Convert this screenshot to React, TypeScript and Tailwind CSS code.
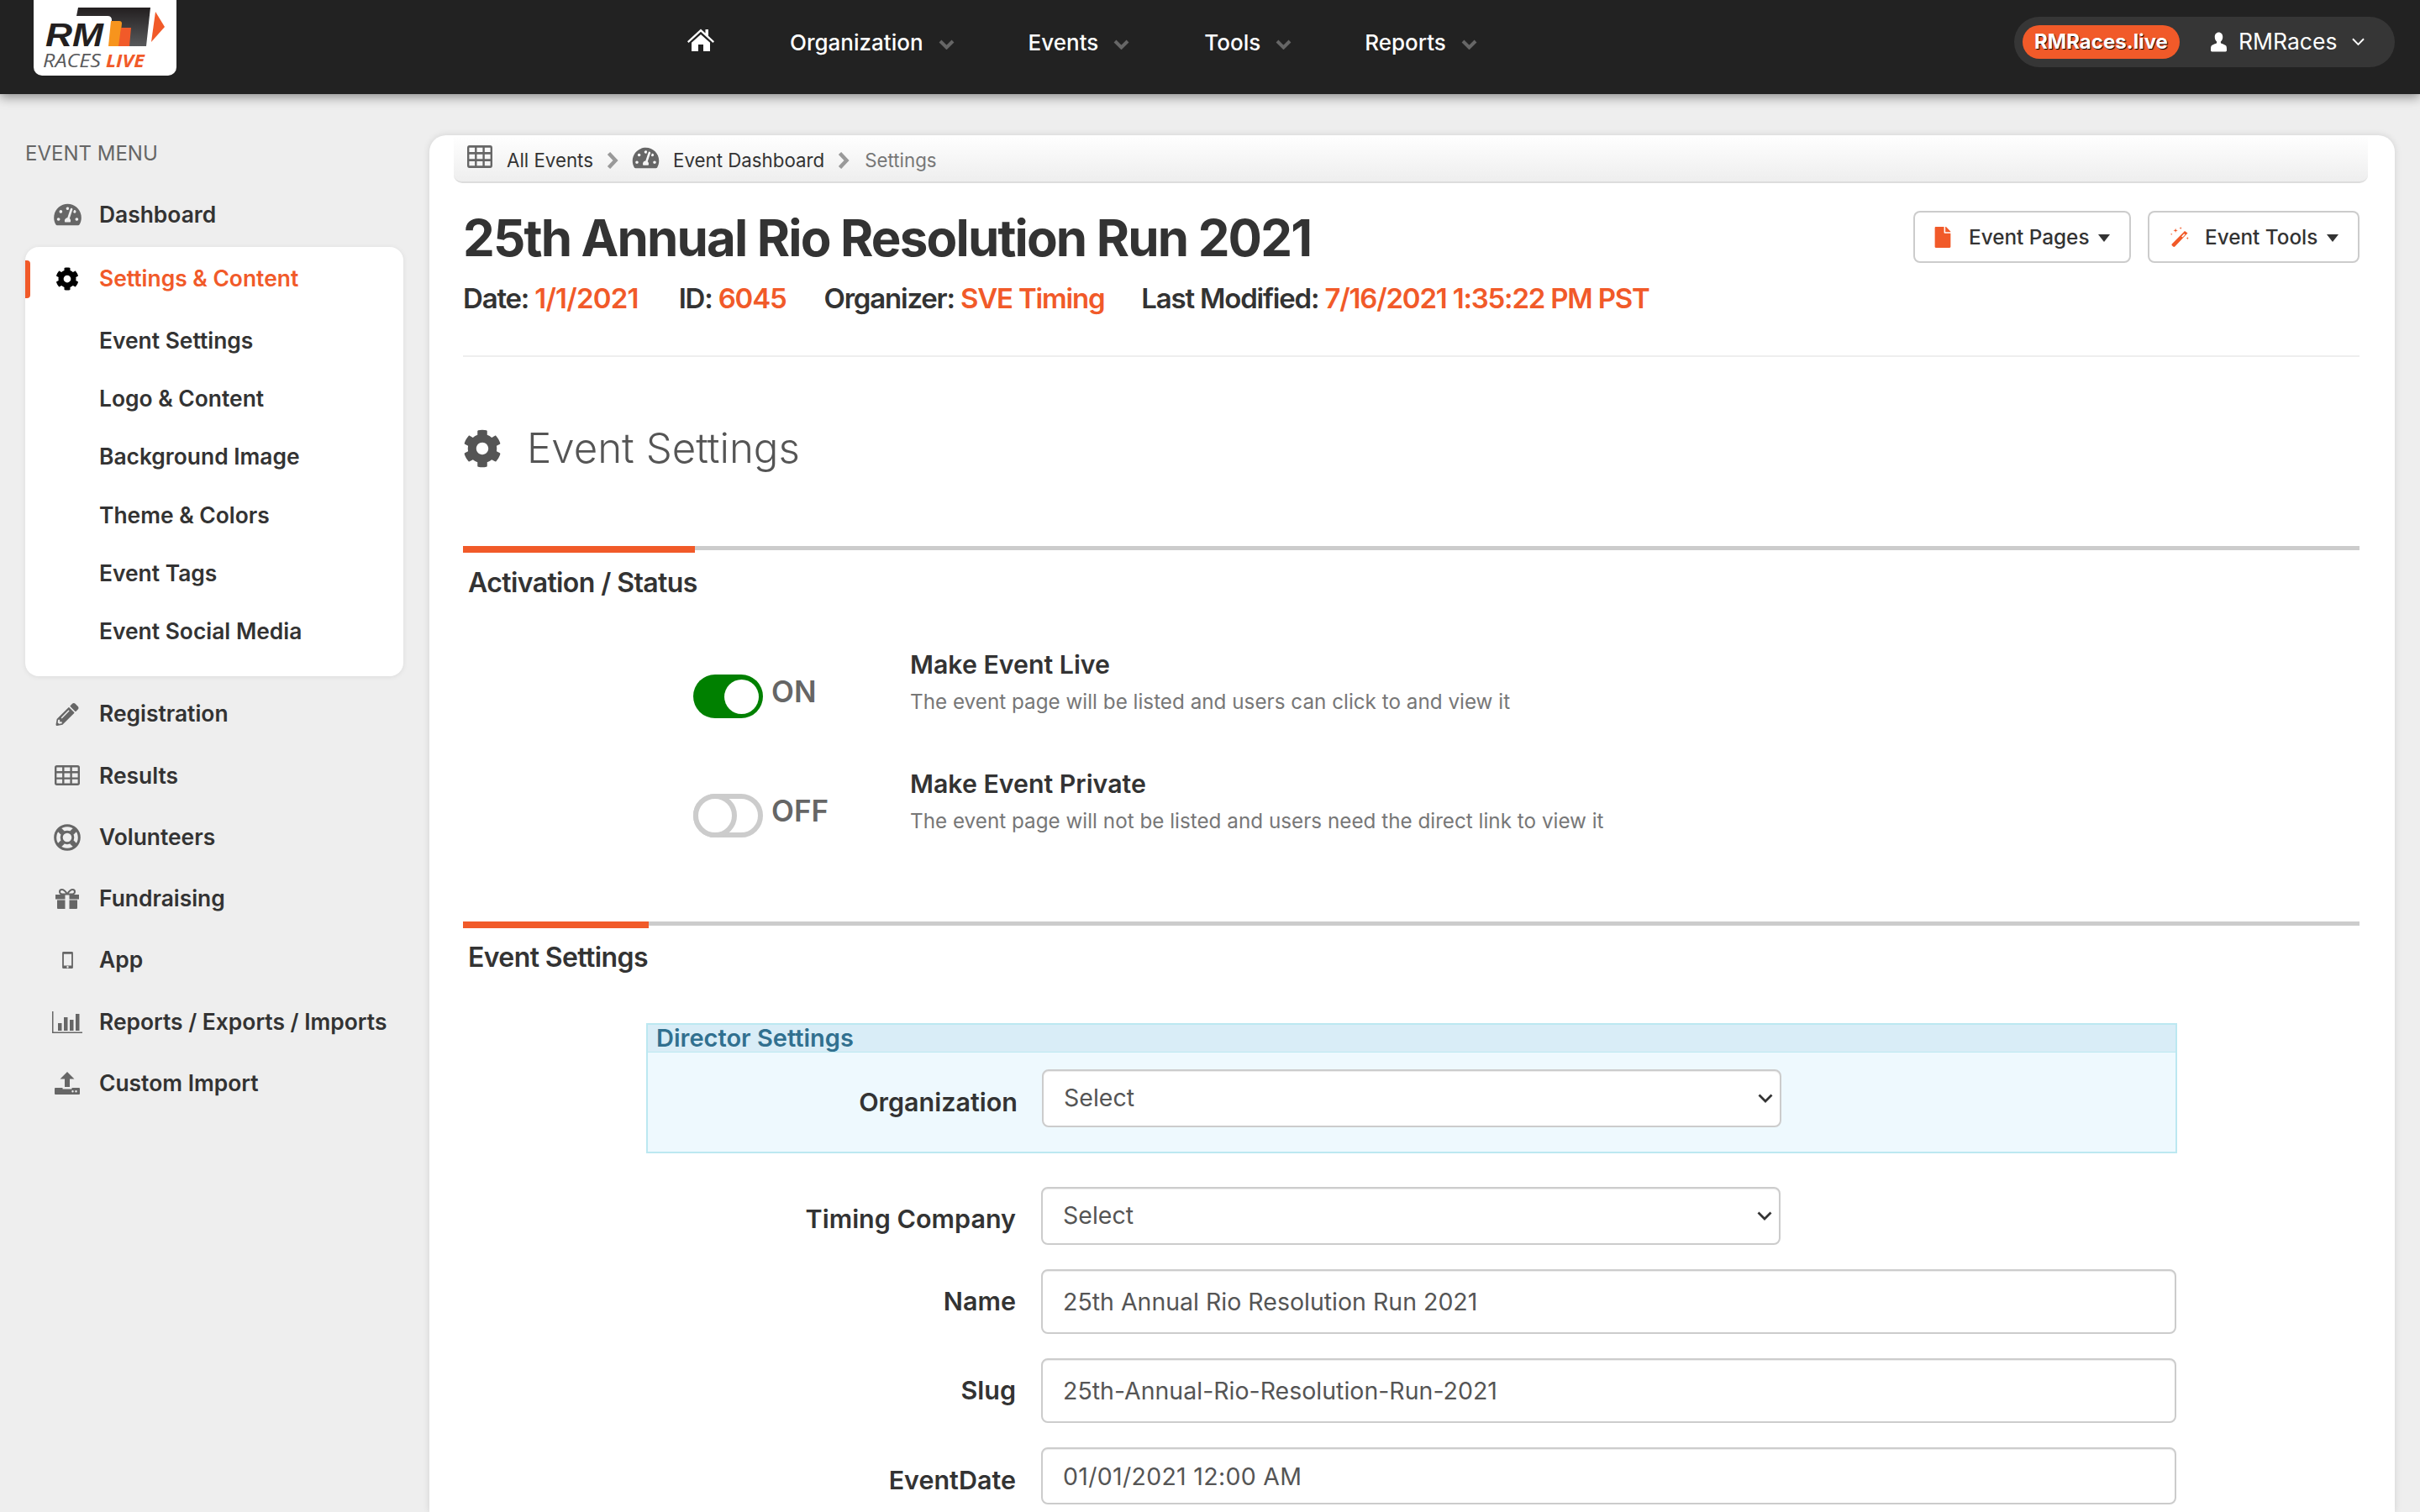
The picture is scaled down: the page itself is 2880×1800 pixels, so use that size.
import React from "react";
import { FaTachometerAlt, FaCog, FaPencilAlt, FaFile } from "react-icons/fa";

const Grid = ({ className = "" }: { className?: string }) => (
  <svg viewBox="0 0 30 24" preserveAspectRatio="none" className={className} fill="none" stroke="currentColor" strokeWidth="2.400">
    <rect x="1.200" y="1.200" width="27.600" height="21.600" rx="1.500" />
    <path d="M1 8.300h28M1 15.600h28M10.300 1v22M19.600 1v22" />
  </svg>
);
const Ring = ({ className = "" }: { className?: string }) => (
  <svg viewBox="0 0 32 32" className={className} fill="none" stroke="currentColor">
    <circle cx="16" cy="16" r="14.300" strokeWidth="3" />
    <circle cx="16" cy="16" r="6.800" strokeWidth="3" />
    <path d="M10.700 10.700L6 6M21.300 10.700L26 6M10.700 21.300L6 26M21.300 21.300L26 26" strokeWidth="6" />
  </svg>
);
const Gift = ({ className = "" }: { className?: string }) => (
  <svg viewBox="0 0 28 24" className={className} fill="currentColor">
    <path d="M0 7h11.500v5.500H0zM16.500 7H28v5.500H16.500zM2 13.500h9.500V24H3a1 1 0 0 1-1-1zM16.500 13.500H26V23a1 1 0 0 1-1 1h-8.500z" />
    <path d="M14 6.500C11 1.500 9 1 7.500 1 5.800 1 5 2.300 5 3.500 5 5.300 6.500 6.500 9 6.500zM14 6.500C17 1.500 19 1 20.500 1 22.200 1 23 2.300 23 3.500 23 5.300 21.500 6.500 19 6.500z" fill="none" stroke="currentColor" strokeWidth="2" />
  </svg>
);
const Wand = ({ className = "" }: { className?: string }) => (
  <svg viewBox="0 0 22 22" className={className} fill="currentColor">
    <path fillRule="evenodd" d="M16.500 4.500l3.200 2.400L6 21.400c-.7.700-1.500.700-2.200.100l-1-.8c-.7-.6-.7-1.400-.1-2.100zM15.800 7.500l-2.800 3 1.200 1 2.800-3z" />
    <path d="M6.500 1.500l.6 1.900 1.900.6-1.900.6-.6 1.900-.6-1.900L4 4l1.900-.6zM12 0l.4 1.100 1.100.4-1.100.4L12 3l-.4-1.100-1.100-.4 1.100-.4zM19.500 11l.4 1.100 1.100.4-1.100.4-.4 1.100-.4-1.100-1.100-.4 1.100-.4zM2 7l.3.800.8.300-.8.300-.3.800-.3-.8-.8-.3.800-.3z" />
  </svg>
);
const Phone = ({ className = "" }: { className?: string }) => (
  <svg viewBox="0 0 16 24" className={className} fill="currentColor">
    <path fillRule="evenodd" d="M2.500 1h11A1.500 1.500 0 0 1 15 2.500v19a1.500 1.500 0 0 1-1.500 1.500h-11A1.500 1.500 0 0 1 1 21.500v-19A1.500 1.500 0 0 1 2.500 1zM3 4v15h10V4zM8 19.700a1.300 1.300 0 1 0 0 2.600 1.300 1.300 0 0 0 0-2.600z" />
  </svg>
);
const Bars = ({ className = "" }: { className?: string }) => (
  <svg viewBox="0 0 36 26" className={className} fill="currentColor">
    <path d="M0 0h1.500v24.500H36V26H0zM7 14h4.500v9H7zM14 7h4.500v16H14zM21 10h4.500v13H21zM28 3h4.500v20H28z" />
  </svg>
);
const Upload = ({ className = "" }: { className?: string }) => (
  <svg viewBox="0 0 30 27" className={className} fill="currentColor">
    <path fillRule="evenodd" d="M15 0l8.500 8.500H18V18h-6V8.500H6.500zM1 19h8.500v1.500h11V19H29a1 1 0 0 1 1 1v6a1 1 0 0 1-1 1H1a1 1 0 0 1-1-1v-6a1 1 0 0 1 1-1zM21.500 22a1.200 1.200 0 1 0 0 2.400 1.200 1.200 0 0 0 0-2.400zM25.500 22a1.200 1.200 0 1 0 0 2.400 1.200 1.200 0 0 0 0-2.400z" />
  </svg>
);
const Home = ({ className = "" }: { className?: string }) => (
  <svg viewBox="0 0 32 27" className={className} fill="currentColor">
    <path d="M16 0.500l5.500 5V1H25v7.700l7 6.500-1.500 1.800L16 3.800 1.500 17 0 15.200zM16 7l11 9.800V27h-8v-8h-6v8H5V16.800z" />
  </svg>
);
const User = ({ className = "" }: { className?: string }) => (
  <svg viewBox="0 0 20 24" className={className} fill="currentColor">
    <path d="M10 0c3 0 5 2.400 5 5.800 0 2.600-1 4.700-2.500 5.700v1.500c0 1 4.500 1.500 6.500 3.500 1 1 1 3 1 6 0 1-.5 1.500-1.500 1.500h-17C.5 24 0 23.500 0 22.500c0-3 0-5 1-6 2-2 6.500-2.500 6.500-3.500v-1.500C6 10.500 5 8.400 5 5.800 5 2.400 7 0 10 0z" />
  </svg>
);
const Chev = ({ className = "" }: { className?: string }) => (
  <svg viewBox="0 0 19 12" className={className} fill="none" stroke="currentColor" strokeWidth="4">
    <path d="M2 2l7.500 7.500L17 2" />
  </svg>
);
const ChevR = ({ className = "" }: { className?: string }) => (
  <svg viewBox="0 0 14 20" className={className} fill="none" stroke="currentColor" strokeWidth="4.500">
    <path d="M2.500 1.500L10.500 10l-8 8.500" />
  </svg>
);
const Caret = () => (
  <span className="inline-block w-0 h-0 border-x-[7.5px] border-x-transparent border-t-[9px] border-t-[#333] ml-[11px] mt-[3px]" />
);

const Logo = () => (
  <svg viewBox="0 0 170 90" className="w-[170px] h-[90px] block">
    <defs>
      <linearGradient id="lg" x1="0" y1="0" x2="0" y2="1">
        <stop offset="0" stopColor="#231f20" />
        <stop offset="1" stopColor="#58595b" />
      </linearGradient>
    </defs>
    <path d="M53 9H139L134 55H90L93 24Q93 19 88 19H51z" fill="url(#lg)" />
    <path d="M92 25H102Q105 25 105 28L102 55H89z" fill="#f7941d" />
    <path d="M104 33H116L114 55H101z" fill="#f15a29" />
    <path d="M145 14L156 32L140 50z" fill="#f15a29" />
    <text x="14" y="55" fontFamily="'Liberation Sans',sans-serif" fontWeight="700" fontStyle="italic" fontSize="39" fill="#231f20" textLength="69" lengthAdjust="spacingAndGlyphs">RM</text>
    <text x="11" y="80" fontFamily="'Open Sans',sans-serif" fontStyle="italic" fontSize="21" fill="#58595b" textLength="69" lengthAdjust="spacingAndGlyphs">RACES</text>
    <text x="86" y="80" fontFamily="'Open Sans',sans-serif" fontWeight="700" fontStyle="italic" fontSize="21" fill="#f15a29" textLength="46" lengthAdjust="spacingAndGlyphs">LIVE</text>
  </svg>
);

const SideRow = ({ icon, label }: { icon: React.ReactNode; label: string }) => (
  <div className="flex items-center h-[73.3px] text-[#333] font-semibold text-[26.4px]">
    <span className="w-[36px] ml-[32px] mr-[20px] flex justify-center text-[#666]">{icon}</span>
    <span>{label}</span>
  </div>
);

const SubRow = ({ label }: { label: string }) => (
  <div className="flex items-center h-[69.2px] pl-[88px] text-[#333] font-semibold text-[26.4px] translate-y-[1px]">{label}</div>
);

const SectionHead = ({ title, w, gap }: { title: string; w: string; gap: string }) => (
  <div>
    <div className="h-[5px] bg-[#ccc]">
      <div className={`h-[8px] bg-[#f15a29] ${w}`} />
    </div>
    <h2 className={`pl-[6px] ${gap} text-[32px] leading-[44px] font-semibold text-[#333] tracking-[-0.6px]`}>{title}</h2>
  </div>
);

const Toggle = ({ on }: { on: boolean }) =>
  on ? (
    <div className="w-[83px] h-[52px] rounded-full bg-[#008000] flex justify-end items-center pr-[5px]">
      <div className="w-[41px] h-[41px] rounded-full bg-white" />
    </div>
  ) : (
    <div className="relative w-[83px] h-[52px] rounded-full border-[6px] border-[#ccc] bg-white">
      <div className="absolute -left-[6px] -top-[6px] w-[52px] h-[52px] rounded-full border-[6px] border-[#ccc] bg-white" />
    </div>
  );

const StatusRow = ({ on, title, desc }: { on: boolean; title: string; desc: string }) => (
  <div className="flex h-[142px]">
    <div className="w-[274px]" />
    <div className="w-[258px] flex items-start pt-[14px]">
      <Toggle on={on} />
      <span className="ml-[10px] text-[35px] leading-[40px] font-semibold text-[#666]">{on ? "ON" : "OFF"}</span>
    </div>
    <div>
      <div className="text-[30.3px] leading-[40px] font-semibold text-[#333] -mt-[18px]">{title}</div>
      <div className="text-[24.25px] leading-[40px] text-[#777] mt-[5px]">{desc}</div>
    </div>
  </div>
);

const fieldCls =
  "block bg-white border-2 border-[#ccc] rounded-[8px] text-[28.5px] text-[#555] shadow-[inset_0_1px_1px_rgba(0,0,0,0.075)] outline-none";

const Label = ({ children, cls = "" }: { children: React.ReactNode; cls?: string }) => (
  <div className={`w-[440px] text-right text-[30.5px] font-semibold text-[#333] ${cls}`}>{children}</div>
);

const SelectBox = () => (
  <div className="relative w-[880px]">
    <select className={`${fieldCls} appearance-none w-full h-[69px] pl-[24px] pr-[10px]`} defaultValue="Select">
      <option>Select</option>
    </select>
    <svg viewBox="0 0 18 11" className="absolute right-[10px] top-[29px] w-[18px] h-[11px] text-[#333] pointer-events-none" fill="none" stroke="currentColor" strokeWidth="2.800">
      <path d="M1.500 1.500L9 9l7.500-7.500" />
    </svg>
  </div>
);

const TextBox = ({ v, h, cls = "" }: { v: string; h: string; cls?: string }) => (
  <input readOnly value={v} className={`${fieldCls} w-[1351px] ${h} px-[24px] ${cls}`} />
);

export default function App() {
  return (
    <div className="w-[2880px] h-[1800px] overflow-hidden bg-[#eeeeee] font-['Inter',sans-serif] flex flex-col">
      <header className="relative z-10 h-[112px] shrink-0 bg-[#222222] shadow-[0_4px_12px_rgba(0,0,0,0.4)] flex items-start text-white">
        <div className="ml-[40px] w-[170px] h-[90px] bg-white rounded-b-[10px] overflow-hidden">
          <Logo />
        </div>
        <nav className="flex items-center h-[100px] ml-[608px] text-[26px] font-medium">
          <Home className="w-[32px] h-[27px] mb-[5px]" />
          <div className="flex items-center ml-[90px]">
            <span>Organization</span>
            <Chev className="w-[19px] h-[12px] ml-[18px] mt-[5px] text-[#666]" />
          </div>
          <div className="flex items-center ml-[88px]">
            <span>Events</span>
            <Chev className="w-[19px] h-[12px] ml-[18px] mt-[5px] text-[#666]" />
          </div>
          <div className="flex items-center ml-[89px]">
            <span>Tools</span>
            <Chev className="w-[19px] h-[12px] ml-[18px] mt-[5px] text-[#666]" />
          </div>
          <div className="flex items-center ml-[87px]">
            <span>Reports</span>
            <Chev className="w-[19px] h-[12px] ml-[18px] mt-[5px] text-[#666]" />
          </div>
        </nav>
        <div className="ml-auto mr-[30px] mt-[20px] w-[453px] h-[60px] rounded-full bg-[#363636] flex items-center pl-[10px]">
          <div className="w-[187px] h-[40px] rounded-full bg-[#f15a29] flex items-center justify-center text-[24px] font-bold [text-shadow:1px_1px_1px_#000]">
            RMRaces.live
          </div>
          <User className="w-[19px] h-[24px] ml-[37px]" />
          <span className="ml-[14px] text-[26.5px]">RMRaces</span>
          <svg viewBox="0 0 16 10" className="w-[15px] h-[10px] ml-[18px]" fill="none" stroke="currentColor" strokeWidth="2"><path d="M1 1l7 7 7-7" /></svg>
        </div>
      </header>

      <div className="flex flex-1 min-h-0">
        <aside className="w-[511px] shrink-0 px-[30px] pt-[53px]">
          <div className="text-[24px] leading-[36px] text-[#666] mb-[18px]">EVENT MENU</div>
          <SideRow icon={<FaTachometerAlt className="w-[33px] h-[29px]" />} label="Dashboard" />
          <div className="relative mt-[2px] w-[450px] bg-white rounded-[16px] shadow-[0_1px_6px_rgba(0,0,0,0.08)] pb-[20px]">
            <div className="absolute left-0 top-[16px] w-[6px] h-[45px] bg-[#f15a29] rounded-r-[4px]" />
            <div className="flex items-center h-[76px] font-semibold text-[26.4px] text-[#f15a29]">
              <span className="w-[36px] ml-[32px] mr-[20px] flex justify-center text-black"><FaCog className="w-[28px] h-[28px]" /></span>
              <span>Settings &amp; Content</span>
            </div>
            {["Event Settings", "Logo & Content", "Background Image", "Theme & Colors", "Event Tags", "Event Social Media"].map((t) => (
              <SubRow key={t} label={t} />
            ))}
          </div>
          <div className="mt-[8px]">
            <SideRow icon={<FaPencilAlt className="w-[28px] h-[27px]" />} label="Registration" />
            <SideRow icon={<Grid className="w-[30px] h-[24px]" />} label="Results" />
            <SideRow icon={<Ring className="w-[32px] h-[32px]" />} label="Volunteers" />
            <SideRow icon={<Gift className="w-[28px] h-[24px]" />} label="Fundraising" />
            <SideRow icon={<Phone className="w-[15px] h-[22px]" />} label="App" />
            <SideRow icon={<Bars className="w-[37px] h-[26px]" />} label="Reports / Exports / Imports" />
            <SideRow icon={<Upload className="w-[30px] h-[27px]" />} label="Custom Import" />
          </div>
        </aside>

        <main className="w-[2339px] mt-[49px] bg-white rounded-t-[20px] shadow-[0_0_8px_rgba(0,0,0,0.12)] pl-[29px] pr-[32px]">
          <div className="h-[57px] rounded-b-[10px] bg-gradient-to-b from-white to-[#eeeeee] border-b-2 border-[#ddd] flex items-center pl-[16px] text-[22.3px] pt-[5px]">
            <Grid className="w-[30px] h-[27px] text-[#666] -mt-[9px]" />
            <span className="ml-[17px] text-[#333]">All Events</span>
            <ChevR className="w-[14px] h-[20px] mx-[16px] text-[#999]" />
            <FaTachometerAlt className="w-[33px] h-[28px] text-[#666] -mt-[7px]" />
            <span className="ml-[16px] text-[#333]">Event Dashboard</span>
            <ChevR className="w-[14px] h-[20px] ml-[16px] mr-[18px] text-[#999]" />
            <span className="text-[#777]">Settings</span>
          </div>

          <div className="pl-[11px] pr-[10px]">
            <div className="flex justify-between pt-[29px] h-[207px] border-b-2 border-[#eee]">
              <div>
                <h1 className="text-[60px] leading-[72px] font-bold text-[#333] tracking-[-1.85px]">25th Annual Rio Resolution Run 2021</h1>
                <div className="flex mt-[14px] text-[33px] leading-[44px] font-semibold text-[#333] tracking-[-1.2px]">
                  <span>Date: <span className="text-[#f15a29] tracking-[-0.8px]">1/1/2021</span></span>
                  <span className="ml-[48px]">ID: <span className="text-[#f15a29]">6045</span></span>
                  <span className="ml-[45px]">Organizer: <span className="text-[#f15a29]">SVE Timing</span></span>
                  <span className="ml-[44px]">Last Modified: <span className="text-[#f15a29]">7/16/2021 1:35:22 PM PST</span></span>
                </div>
              </div>
              <div className="flex gap-[20px] items-start pt-[4px]">
                <div className="w-[259px] h-[62px] border-2 border-[#ccc] rounded-[8px] flex items-center pl-[23px] text-[24.3px] font-medium text-[#333]">
                  <FaFile className="w-[20px] h-[25px] text-[#f15a29]" />
                  <span className="ml-[21px]">Event Pages</span>
                  <Caret />
                </div>
                <div className="w-[252px] h-[62px] border-2 border-[#ccc] rounded-[8px] flex items-center pl-[24px] text-[24.3px] font-medium text-[#333]">
                  <Wand className="w-[24px] h-[24px] text-[#f15a29]" />
                  <span className="ml-[18px]">Event Tools</span>
                  <Caret />
                </div>
              </div>
            </div>

            <div className="flex items-center h-[110px] mt-[54px] text-[#555]">
              <FaCog className="w-[46px] h-[46px]" />
              <span className="ml-[30px] text-[49.2px] font-light text-[#555]">Event Settings</span>
            </div>

            <div className="mt-[61px]">
              <SectionHead title="Activation / Status" w="w-[276px]" gap="mt-[17px]" />
            </div>
            <div className="mt-[73px]">
              <StatusRow on title="Make Event Live" desc="The event page will be listed and users can click to and view it" />
              <StatusRow on={false} title="Make Event Private" desc="The event page will not be listed and users need the direct link to view it" />
            </div>

            <div className="mt-[24px]">
              <SectionHead title="Event Settings" w="w-[221px]" gap="mt-[16px]" />
            </div>

            <div className="ml-[218px] w-[1822px] mt-[56px]">
              <div className="h-[155px] border-2 border-[#bce8f1] bg-[#eef9fe]">
                <div className="h-[33px] bg-[#d9edf7] border-b border-[#bce8f1] pl-[10px] text-[29px] leading-[31px] font-semibold text-[#31708f]">Director Settings</div>
                <div className="flex items-start mt-[20px]">
                  <Label cls="leading-[44px] mt-[17px] w-[439px]">Organization</Label>
                  <div className="ml-[29px]"><SelectBox /></div>
                </div>
              </div>
              <div className="flex items-start mt-[40px]">
                <Label cls="leading-[44px] mt-[16px]">Timing Company</Label>
                <div className="ml-[30px]"><SelectBox /></div>
              </div>
              <div className="flex items-center mt-[29px]">
                <Label cls="-mt-[2px]">Name</Label>
                <div className="ml-[30px]"><TextBox v="25th Annual Rio Resolution Run 2021" h="h-[77px]" /></div>
              </div>
              <div className="flex items-center mt-[29px]">
                <Label cls="-mt-[1px]">Slug</Label>
                <div className="ml-[30px]"><TextBox v="25th-Annual-Rio-Resolution-Run-2021" h="h-[77px]" /></div>
              </div>
              <div className="flex items-center mt-[29px]">
                <Label cls="mt-[10px]">EventDate</Label>
                <div className="ml-[30px]"><TextBox v="01/01/2021 12:00 AM" h="h-[68px]" cls="tracking-[0.3px]" /></div>
              </div>
            </div>
          </div>
        </main>
      </div>
    </div>
  );
}
